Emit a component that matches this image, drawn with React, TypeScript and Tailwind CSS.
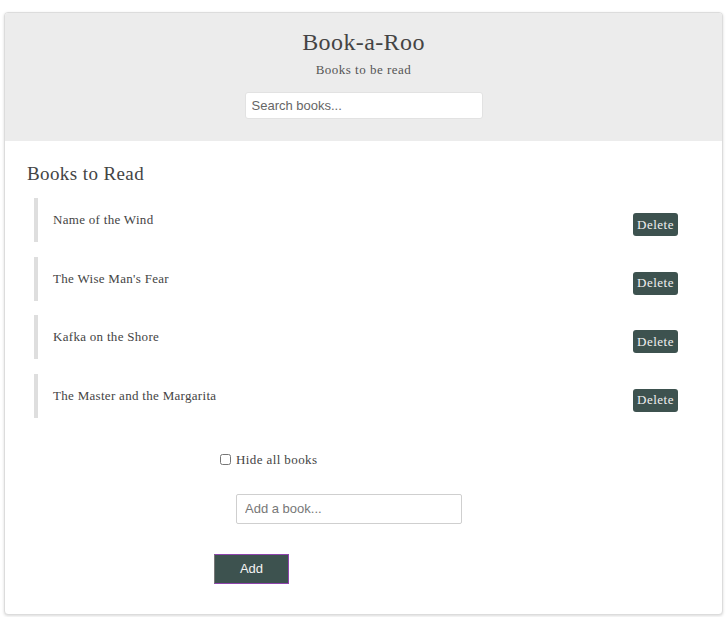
const books = [
  "Name of the Wind",
  "The Wise Man's Fear",
  "Kafka on the Shore",
  "The Master and the Margarita",
];

export default function App() {
  return (
    <div className="min-h-[617px] bg-white pt-[12px] px-[4px] pb-[3px] font-['Liberation_Serif',serif] text-[#444]">
      <div className="rounded-[4px] border border-[#dcdcdc] shadow-[0_1px_3px_rgba(0,0,0,0.15)] overflow-hidden bg-white">
        <header className="bg-[#ececec] h-[128px] flex flex-col items-center pt-[14px]">
          <h1 className="text-[24px] leading-[30px] tracking-[0.4px] text-[#444]">Book-a-Roo</h1>
          <p className="text-[13px] leading-[16px] mt-[5px] tracking-[0.5px] text-[#555]">Books to be read</p>
          <input
            placeholder="Search books..."
            className="mt-[14px] w-[238px] h-[27px] rounded-[3px] bg-white border border-[#e2e2e2] px-[6px] font-['Liberation_Sans',sans-serif] text-[13px] text-[#555] placeholder:text-[#666] outline-none"
          />
        </header>

        <section className="px-[22px] pt-[21px] pb-[30px]">
          <h2 className="text-[19px] leading-[24px] tracking-[0.4px] text-[#444]">Books to Read</h2>
          <ul className="mt-[12px] ml-[7px] flex flex-col gap-[14.5px]">
            {books.map((b) => (
              <li key={b} className="h-[44px] border-l-[4px] border-[#dedede] flex items-start pl-[15px] pr-[22px]">
                <span className="mt-[14px] text-[13px] leading-[16px] tracking-[0.3px] text-[#444]">{b}</span>
                <button className="ml-auto mt-[15px] h-[23px] w-[45px] rounded-[3px] bg-[#3d524f] text-[#f0f0f0] text-[13px] tracking-[0.5px] font-['Liberation_Serif',serif]">
                  Delete
                </button>
              </li>
            ))}
          </ul>

          <label className="mt-[34px] ml-[193px] flex items-center gap-[5px]">
            <input type="checkbox" className="w-[11px] h-[11px] accent-[#888]" />
            <span className="text-[13px] leading-[16px] tracking-[0.4px] text-[#444]">Hide all books</span>
          </label>

          <input
            placeholder="Add a book..."
            className="block mt-[26px] ml-[209px] w-[226px] h-[30px] rounded-[2px] border border-[#cfcfcf] px-[8px] font-['Liberation_Sans',sans-serif] text-[13px] text-[#555] placeholder:text-[#777] outline-none"
          />

          <button className="block mt-[30px] ml-[187px] w-[75px] h-[30px] bg-[#3d524f] text-[#f4f4f4] font-['Liberation_Sans',sans-serif] text-[13px] border border-l-[#777] border-t-[#8e44ad] border-r-[#8e44ad] border-b-[#8e44ad]">
            Add
          </button>
        </section>
      </div>
    </div>
  );
}
